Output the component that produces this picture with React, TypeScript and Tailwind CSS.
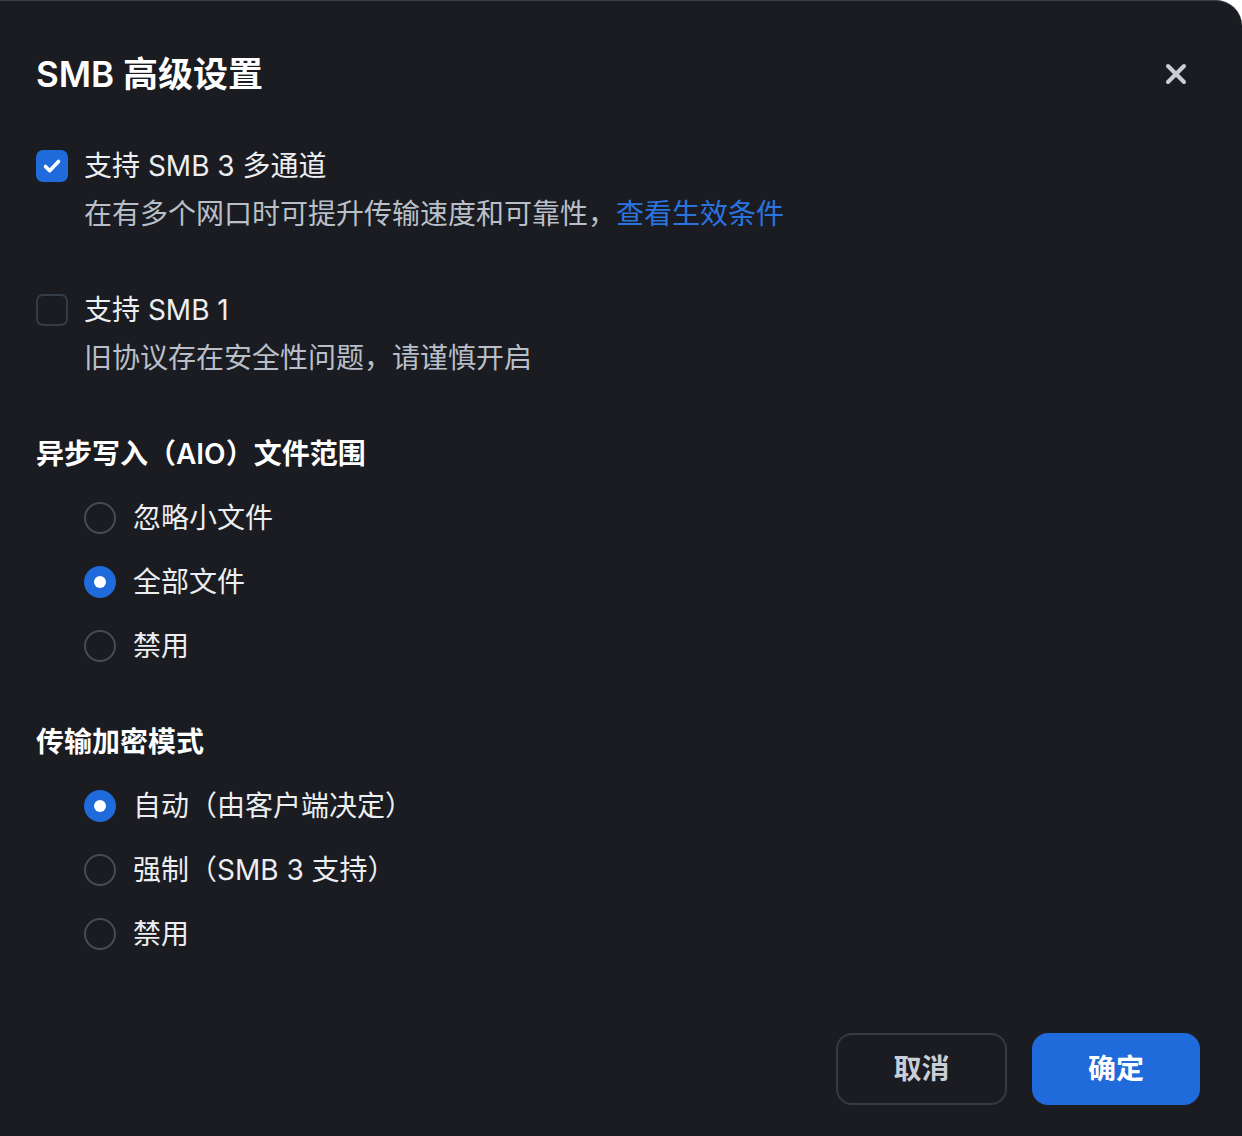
import { X } from 'lucide-react';

const font = { fontFamily: 'Inter, "Noto Sans CJK SC", sans-serif' };

interface RadioProps {
  label: string;
  checked?: boolean;
}

const Radio = ({ label, checked = false }: RadioProps) => (
  <div className="flex h-16 items-center gap-[17px] pl-12">
    {checked ? (
      <span className="flex size-8 items-center justify-center rounded-full bg-[#1f6bdb]">
        <span className="size-3 rounded-full bg-white" />
      </span>
    ) : (
      <span className="size-8 rounded-full border-2 border-[#454c58]" />
    )}
    <span className="text-[28px] leading-[48px] text-[#eceef1]">{label}</span>
  </div>
);

interface CheckProps {
  label: string;
  checked?: boolean;
  children: React.ReactNode;
}

const CheckOption = ({ label, checked = false, children }: CheckProps) => (
  <div className="flex gap-4">
    {checked ? (
      <span className="mt-2 flex size-8 shrink-0 items-center justify-center rounded-[7px] bg-[#1f6bdb]">
        <svg viewBox="0 0 24 24" className="size-6" fill="none" stroke="white" strokeWidth={3.6} strokeLinecap="round" strokeLinejoin="round">
          <path d="M5.5 12.5l4.2 4.2L18.5 7.5" />
        </svg>
      </span>
    ) : (
      <span className="mt-2 size-8 shrink-0 rounded-[7px] border-2 border-[#363c45]" />
    )}
    <div className="text-[28px] leading-[48px]">
      <div className="text-[#eceef1]">{label}</div>
      <div className="text-[#b9bfc8]">{children}</div>
    </div>
  </div>
);

export default function App() {
  return (
    <div style={font} className="flex h-[1136px] w-[1242px] flex-col rounded-tr-[26px] border-t border-[#3a404a] bg-[#1a1c21] pt-px pr-[42px] pl-9">
      <div className="mt-[48px] flex h-12 items-center justify-between">
        <h2 className="text-[35px] leading-[48px] font-semibold text-white">SMB 高级设置</h2>
        <button type="button" className="flex size-12 items-center justify-center text-[#c9ced6]">
          <X className="size-8" strokeWidth={3} />
        </button>
      </div>

      <div className="mt-[44px] flex flex-col gap-12">
        <CheckOption label="支持 SMB 3 多通道" checked>
          在有多个网口时可提升传输速度和可靠性，<span className="text-[#2a74e0]">查看生效条件</span>
        </CheckOption>
        <CheckOption label="支持 SMB 1">旧协议存在安全性问题，请谨慎开启</CheckOption>
      </div>

      <h3 className="mt-12 text-[28px] leading-[48px] font-semibold text-white">异步写入（AIO）文件范围</h3>
      <div className="mt-2">
        <Radio label="忽略小文件" />
        <Radio label="全部文件" checked />
        <Radio label="禁用" />
      </div>

      <h3 className="mt-10 text-[28px] leading-[48px] font-semibold text-white">传输加密模式</h3>
      <div className="mt-2">
        <Radio label="自动（由客户端决定）" checked />
        <Radio label="强制（SMB 3 支持）" />
        <Radio label="禁用" />
      </div>

      <div className="mt-[67px] flex justify-end gap-[25px]">
        <button type="button" className="h-[72px] w-[171px] rounded-2xl border-2 border-[#353b44] text-[28px] font-semibold text-[#c9ced6]">
          取消
        </button>
        <button type="button" className="h-[72px] w-[168px] rounded-2xl bg-[#1f6bdb] text-[28px] font-semibold text-white">
          确定
        </button>
      </div>
    </div>
  );
}
